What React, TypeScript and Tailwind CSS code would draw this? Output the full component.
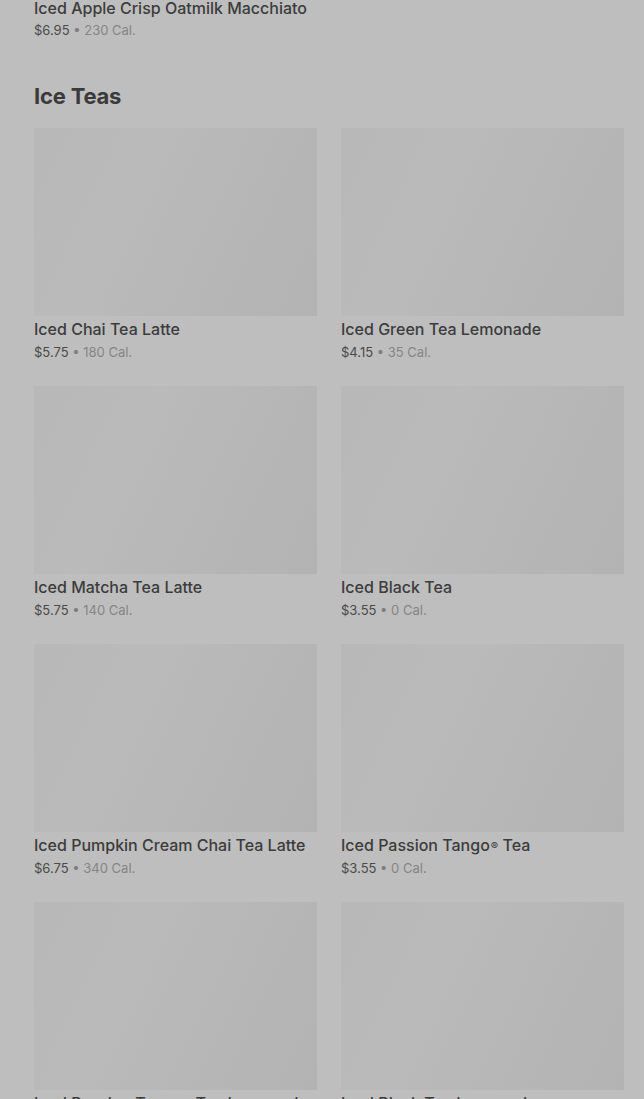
import React from "react";

type Item = { name: React.ReactNode; price: string; cal: string };

const Reg = () => <sup className="text-[11px] relative top-[-1px] ml-[1px]">®</sup>;

const items: Item[] = [
  { name: "Iced Chai Tea Latte", price: "$5.75", cal: "180 Cal." },
  { name: "Iced Green Tea Lemonade", price: "$4.15", cal: "35 Cal." },
  { name: "Iced Matcha Tea Latte", price: "$5.75", cal: "140 Cal." },
  { name: "Iced Black Tea", price: "$3.55", cal: "0 Cal." },
  { name: "Iced Pumpkin Cream Chai Tea Latte", price: "$6.75", cal: "340 Cal." },
  { name: <>Iced Passion Tango<Reg /> Tea</>, price: "$3.55", cal: "0 Cal." },
  { name: <>Iced Passion Tango<Reg /> Tea Lemonade</>, price: "$4.15", cal: "60 Cal." },
  { name: "Iced Black Tea Lemonade", price: "$3.95", cal: "70 Cal." },
];

function PriceLine({ price, cal, top = 1 }: { price: string; cal: string; top?: number }) {
  return (
    <div className={`text-[13px] leading-[20px] ${top === 2 ? "mt-[2px]" : "mt-[1px]"}`}>
      <span className="text-[#4a4a4a]">{price}</span>
      <span className="text-[#7d7d7d]"> • </span>
      <span className="text-[#858585]">{cal}</span>
    </div>
  );
}

function Card({ item }: { item: Item }) {
  return (
    <div className="flex flex-col">
      <div className="h-[188px] w-full bg-[linear-gradient(115deg,#b8b8b8_0%,#bababa_35%,#b7b7b7_60%,#b3b3b3_100%)]" />
      <div className="mt-[2px] text-[16px] leading-[22px] font-medium text-[#3c3c3c] whitespace-nowrap">
        {item.name}
      </div>
      <PriceLine price={item.price} cal={item.cal} top={2} />
    </div>
  );
}

export default function App() {
  return (
    <div
      className="w-[644px] h-[1099px] overflow-hidden bg-[#bebebe] pl-[34px] pr-[20px]"
      style={{ fontFamily: "Inter, 'Noto Sans', sans-serif" }}
    >
      <div className="mt-[-3px]">
        <div className="text-[16px] leading-[22px] font-medium text-[#3c3c3c]">
          Iced Apple Crisp Oatmilk Macchiato
        </div>
        <PriceLine price="$6.95" cal="230 Cal." />
      </div>
      <h2 className="mt-[41px] text-[22px] leading-[30px] font-bold text-[#3a3a3a] tracking-[-0.2px]">
        Ice Teas
      </h2>
      <div className="mt-[17px] grid grid-cols-2 gap-x-[24px] gap-y-[24px]">
        {items.map((it, i) => (
          <Card key={i} item={it} />
        ))}
      </div>
    </div>
  );
}
